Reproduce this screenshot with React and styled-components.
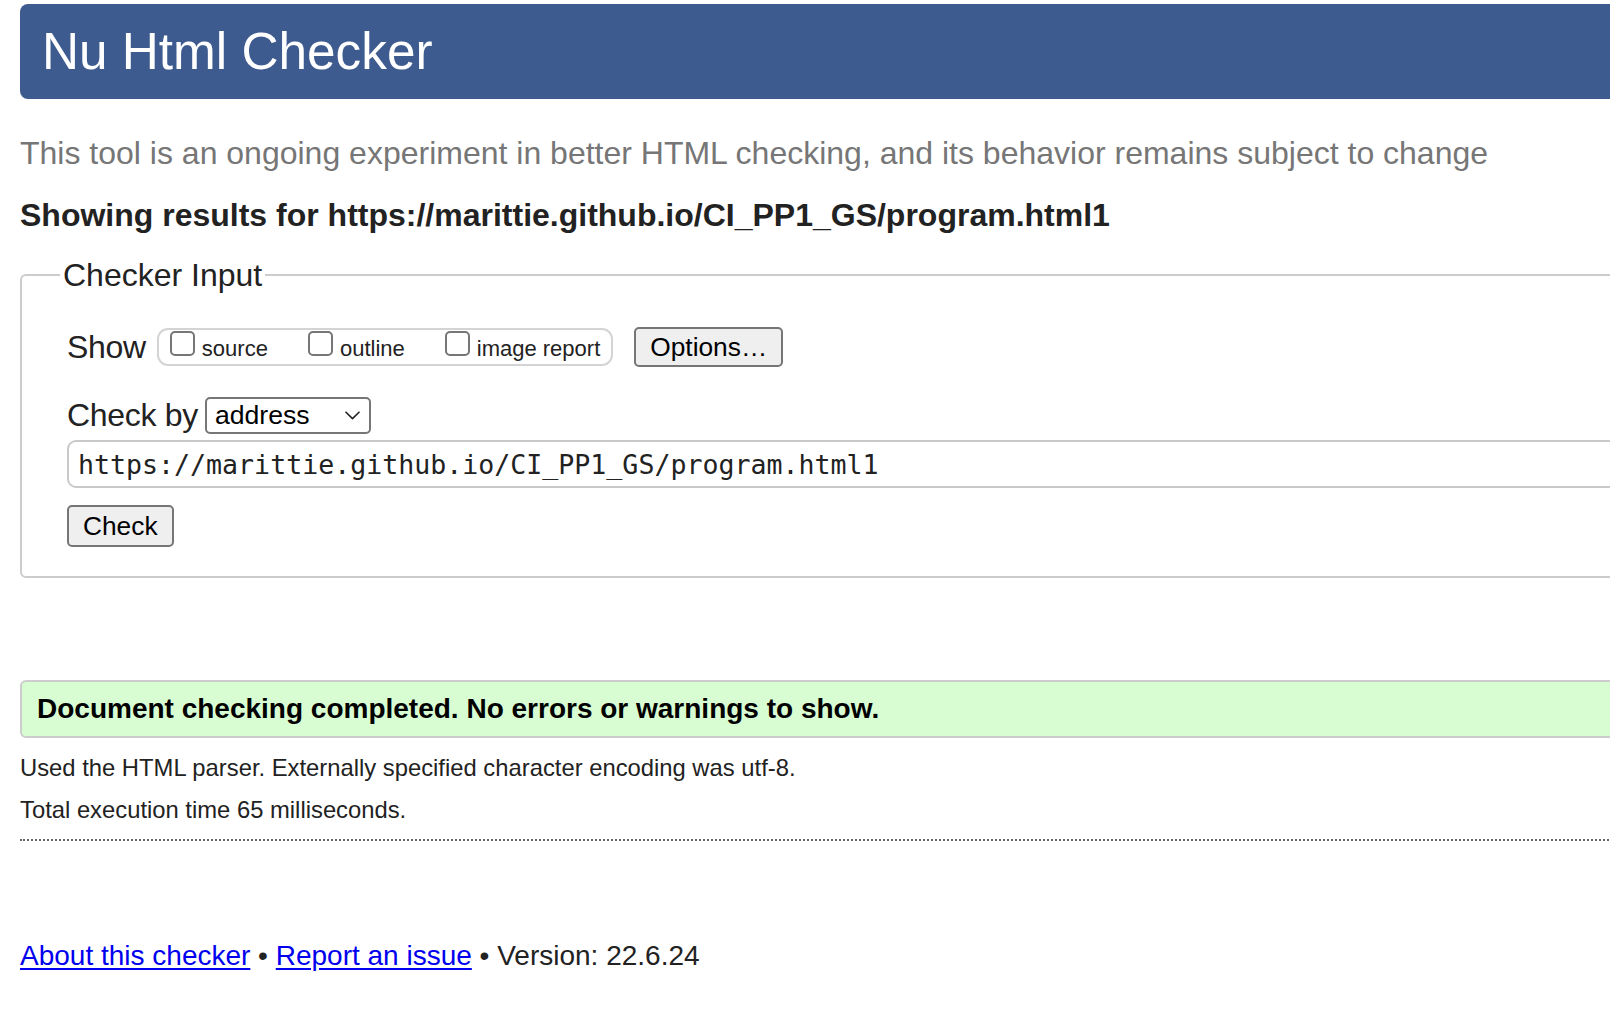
import React from "react";
import styled, { createGlobalStyle } from "styled-components";

const Global = createGlobalStyle`
  html, body {
    margin: 0;
    padding: 0;
    overflow: hidden;
    background: #ffffff;
  }
  body {
    font-family: "Liberation Sans", Arial, Helvetica, sans-serif;
    color: #222222;
  }
`;

const Page = styled.div`
  width: 1900px;
  padding: 4px 0 40px 20px;
  box-sizing: border-box;
`;

const Header = styled.header`
  height: 95px;
  box-sizing: border-box;
  background: #3e5b8f;
  border-radius: 8px;
  display: flex;
  align-items: center;
  padding-left: 22px;
`;

const Title = styled.h1`
  margin: 0;
  font-size: 51.3px;
  font-weight: 400;
  line-height: 1;
  color: #ffffff;
`;

const Lead = styled.p`
  margin: 34px 0 0;
  font-size: 32px;
  line-height: 40px;
  color: #767676;
`;

const Results = styled.h2`
  margin: 22px 0 0;
  font-size: 32px;
  line-height: 40px;
  font-weight: 700;
  color: #222222;
`;

const Fieldset = styled.fieldset`
  margin: 20px 0 0;
  border: 2px solid #cccccc;
  border-radius: 6px;
  padding: 32px 0 29px 45px;
`;

const Legend = styled.legend`
  margin-left: -7px;
  padding: 0 3px;
  font-size: 32px;
  line-height: 40px;
  color: #222222;
`;

const Row = styled.div`
  display: flex;
  align-items: center;
  height: ${(p) => p.$h || 40}px;
  margin-top: ${(p) => p.$mt || 0}px;
`;

const FieldLabel = styled.span`
  font-size: 32px;
  line-height: 40px;
  color: #222222;
  letter-spacing: -0.3px;
`;

const ShowGroup = styled.div`
  display: flex;
  align-items: flex-start;
  gap: 40px;
  height: 38px;
  box-sizing: border-box;
  border: 2px solid #d4d4d4;
  border-radius: 11px;
  padding: 0 11px 0 11px;
  margin-left: 11px;
`;

const CheckItem = styled.label`
  display: flex;
  align-items: flex-start;
  gap: 7px;
`;

const Box = styled.span`
  display: block;
  width: 25px;
  height: 25px;
  box-sizing: border-box;
  margin-top: 1px;
  border: 2px solid #767676;
  border-radius: 5px;
  background: #ffffff;
`;

const CheckText = styled.span`
  margin-top: 6px;
  font-size: 22px;
  line-height: 26px;
  color: #222222;
`;

const Button = styled.button`
  font-family: "Liberation Sans", Arial, Helvetica, sans-serif;
  font-size: 26.3px;
  line-height: 1;
  color: #000000;
  background: #efefef;
  border: 2px solid #767676;
  border-radius: 5px;
  padding: 0 14px;
  height: ${(p) => p.$h}px;
  margin: ${(p) => p.$margin || 0};
  cursor: pointer;
`;

const Select = styled.div`
  display: flex;
  align-items: center;
  justify-content: space-between;
  width: 166px;
  height: 37px;
  box-sizing: border-box;
  border: 2px solid #767676;
  border-radius: 5px;
  padding: 0 9px 0 8px;
  margin-left: 7px;
  background: #ffffff;
  font-size: 26.6px;
  color: #000000;
`;

const UrlInput = styled.div`
  margin-top: 5px;
  height: 48px;
  box-sizing: border-box;
  border: 2px solid #c9c9c9;
  border-radius: 9px;
  display: flex;
  align-items: center;
  padding-left: 9px;
  font-family: "DejaVu Sans Mono", "Liberation Mono", monospace;
  font-size: 26.6px;
  color: #222222;
  white-space: nowrap;
`;

const Success = styled.div`
  margin-top: 102px;
  height: 58px;
  box-sizing: border-box;
  background: #d8fdd2;
  border: 2px solid #cccccc;
  border-radius: 6px;
  display: flex;
  align-items: center;
  padding-left: 15px;
  font-size: 28px;
  font-weight: 700;
  color: #000000;
`;

const Note = styled.p`
  margin: ${(p) => p.$mt}px 0 0;
  font-size: 23.8px;
  line-height: 32px;
  color: #222222;
`;

const Rule = styled.hr`
  margin: 13px 0 0;
  border: none;
  border-top: 2px dotted #666666;
  height: 0;
`;

const Footer = styled.p`
  margin: 97px 0 0;
  font-size: 28px;
  line-height: 36px;
  color: #222222;
`;

const Link = styled.a`
  color: #0000ee;
  text-decoration: underline;
  text-underline-offset: 3px;
`;

const Chevron = () => (
  <svg width="15" height="9" viewBox="0 0 15 9" fill="none">
    <path d="M1 1.2 L7.5 7.6 L14 1.2" stroke="#222" strokeWidth="1.6" strokeLinecap="round" strokeLinejoin="round" />
  </svg>
);

const options = ["source", "outline", "image report"];

export default function App() {
  return (
    <>
      <Global />
      <Page>
        <Header>
          <Title>Nu Html Checker</Title>
        </Header>
        <Lead>
          This tool is an ongoing experiment in better HTML checking, and its behavior remains subject to change
        </Lead>
        <Results>Showing results for https://marittie.github.io/CI_PP1_GS/program.html1</Results>
        <Fieldset>
          <Legend>Checker Input</Legend>
          <Row>
            <FieldLabel>Show</FieldLabel>
            <ShowGroup>
              {options.map((o) => (
                <CheckItem key={o}>
                  <Box />
                  <CheckText>{o}</CheckText>
                </CheckItem>
              ))}
            </ShowGroup>
            <Button $h={40} $margin="0 0 0 21px">Options…</Button>
          </Row>
          <Row $mt={28}>
            <FieldLabel>Check by</FieldLabel>
            <Select>
              <span>address</span>
              <Chevron />
            </Select>
          </Row>
          <UrlInput>https://marittie.github.io/CI_PP1_GS/program.html1</UrlInput>
          <Row $mt={17} $h={42}>
            <Button $h={42}>Check</Button>
          </Row>
        </Fieldset>
        <Success>Document checking completed. No errors or warnings to show.</Success>
        <Note $mt={14}>Used the HTML parser. Externally specified character encoding was utf-8.</Note>
        <Note $mt={10}>Total execution time 65 milliseconds.</Note>
        <Rule />
        <Footer>
          <Link href="#">About this checker</Link> • <Link href="#">Report an issue</Link> • Version: 22.6.24
        </Footer>
      </Page>
    </>
  );
}
